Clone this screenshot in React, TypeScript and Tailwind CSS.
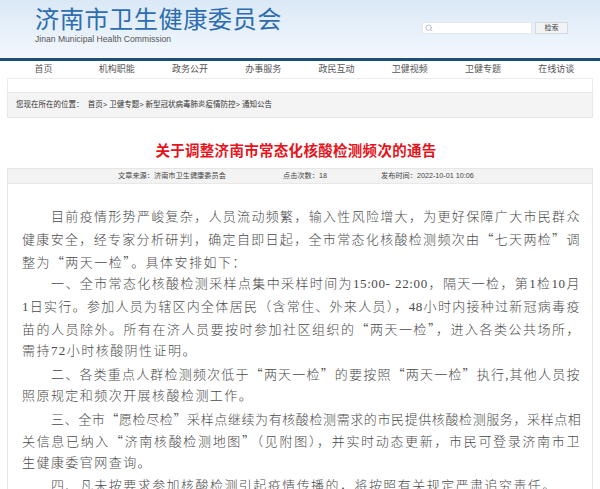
import { Search } from "lucide-react";

const NAV = ["首页", "机构职能", "政务公开", "办事服务", "政民互动", "卫健视频", "卫健专题", "在线访谈"];

// each entry is one printed line; indent = paragraph start, last = ragged end
const LINES: { t: string; indent?: boolean; last?: boolean }[] = [
  { t: "目前疫情形势严峻复杂，人员流动频繁，输入性风险增大，为更好保障广大市民群众", indent: true },
  { t: "健康安全，经专家分析研判，确定自即日起，全市常态化核酸检测频次由“七天两检”调" },
  { t: "整为“两天一检”。具体安排如下：", last: true },
  { t: "一、全市常态化核酸检测采样点集中采样时间为15:00- 22:00，隔天一检，第1检10月", indent: true },
  { t: "1日实行。参加人员为辖区内全体居民（含常住、外来人员），48小时内接种过新冠病毒疫" },
  { t: "苗的人员除外。所有在济人员要按时参加社区组织的“两天一检”，进入各类公共场所，" },
  { t: "需持72小时核酸阴性证明。", last: true },
  { t: "二、各类重点人群检测频次低于“两天一检”的要按照“两天一检”执行,其他人员按", indent: true },
  { t: "照原规定和频次开展核酸检测工作。", last: true },
  { t: "三、全市“愿检尽检”采样点继续为有核酸检测需求的市民提供核酸检测服务，采样点相", indent: true },
  { t: "关信息已纳入“济南核酸检测地图”（见附图），并实时动态更新，市民可登录济南市卫" },
  { t: "生健康委官网查询。", last: true },
  { t: "四、凡未按要求参加核酸检测引起疫情传播的，将按照有关规定严肃追究责任。", indent: true, last: true },
];

// quotes rendered full-width like the original SimSun page
function withQuotes(s: string) {
  return s.split(/([“”])/).map((p, i) =>
    p === "“" || p === "”" ? (
      <span key={i} className="font-['Noto_Sans_CJK_SC',sans-serif]">
        {p}
      </span>
    ) : (
      p
    )
  );
}

export default function App() {
  return (
    <div className="w-[600px] h-[489px] overflow-hidden bg-white font-['Liberation_Sans','Noto_Sans_CJK_SC',sans-serif] text-[#333]">
      {/* Header */}
      <div className="h-[58px] bg-gradient-to-b from-[#dae8f6] to-[#f3f8fd] flex justify-between">
        <div className="pl-[35px] pt-[4px]">
          <div className="text-[24.2px] leading-[28px] text-[#2d6db0] tracking-[0.5px] font-['Noto_Sans_CJK_SC',sans-serif]">
            济南市卫生健康委员会
          </div>
          <div className="text-[8.6px] leading-[12px] text-[#555] mt-[1px]">Jinan Municipal Health Commission</div>
        </div>
        <div className="pt-[22px] pr-[32px] flex gap-[3px] items-start">
          <div className="w-[110px] h-[12px] bg-white border border-[#e2e8ee] flex items-center pl-[2px]">
            <Search className="w-[8px] h-[8px] text-[#9aa3ab]" strokeWidth={2} />
          </div>
          <div className="w-[33px] h-[12px] bg-[#f1f3f5] border border-[#d5d9dd] text-[7px] leading-[10px] text-center text-[#444]">
            检索
          </div>
        </div>
      </div>
      <div className="h-[3px] bg-[#1f4f78]" />

      {/* Nav */}
      <div className="mx-[7px] h-[17px] grid grid-cols-8 items-center text-[9px] text-[#555]">
        {NAV.map((n) => (
          <div key={n} className="text-center">
            {n}
          </div>
        ))}
      </div>
      <div className="mx-[7px] h-[15px] border border-[#ececec] bg-white" />

      {/* Breadcrumb */}
      <div className="mx-[7px] h-[25px] bg-[#f4f4f4] border border-[#e8e8e8] border-t-0 flex items-center pl-[8px] text-[7.5px] text-[#333]">
        您现在所在的位置：&nbsp; 首页&gt; 卫健专题&gt; 新型冠状病毒肺炎疫情防控&gt; 通知公告
      </div>

      {/* Title */}
      <div className="h-[50px] flex items-center justify-center pt-[18px] pr-[8px]">
        <h1 className="text-[14.5px] font-bold tracking-[0.3px] text-[#e5141c] font-['Liberation_Serif','Noto_Sans_CJK_SC',serif]">
          关于调整济南市常态化核酸检测频次的通告
        </h1>
      </div>

      {/* Article */}
      <div className="mx-[7px] border border-[#e6e6e6]">
        <div className="h-[15px] bg-[#f3f3f3] border-b border-[#e8e8e8] flex items-center pl-[110px] text-[7.2px] text-[#444]">
          <span className="w-[165px]">文章来源：济南市卫生健康委员会</span>
          <span className="w-[98px]">点击次数：18</span>
          <span>发布时间：2022-10-01 10:06</span>
        </div>
        <div className="pt-[22px] pl-[14px] pr-[12px] pb-[20px] text-[13px] leading-[22.4px] text-[#4a4a4a] font-['Liberation_Serif','Noto_Sans_CJK_SC',serif] font-light">
          {LINES.map((l, i) => (
            <div
              key={i}
              className={
                "h-[22.4px] whitespace-nowrap tracking-[0.6px] " +
                (l.indent ? "pl-[29px] " : "") +
                (l.last ? "text-left tracking-[1.45px]" : "text-justify [text-align-last:justify]")
              }
            >
              {withQuotes(l.t)}
            </div>
          ))}
        </div>
      </div>
    </div>
  );
}
